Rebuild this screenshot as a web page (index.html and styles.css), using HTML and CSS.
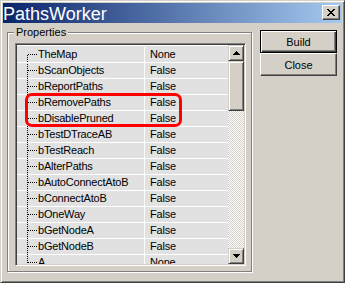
FILE: index.html
```html
<!DOCTYPE html>
<html>
<head>
  <meta name="viewport" content="width=device-width, initial-scale=1.0">
  <link rel="stylesheet" href="styles.css">
</head>
<body>
  <div class="window">
    <!-- Barra de título -->
    <div class="titlebar">
      <span class="title">PathsWorker</span>
      <div class="title-close">
        <svg width="8" height="7" viewBox="0 0 8 7" shape-rendering="crispEdges">
          <path d="M0 0h2v1H0zM6 0h2v1H6zM1 1h2v1H1zM5 1h2v1H5zM2 2h4v1H2zM3 3h2v1H3zM2 4h4v1H2zM1 5h2v1H1zM5 5h2v1H5zM0 6h2v1H0zM6 6h2v1H6z" fill="#000"/>
        </svg>
      </div>
    </div>

    <div class="client">
      <!-- Grupo de propriedades -->
      <div class="group">
        <span class="group-label">Properties</span>
        <div class="listbox">
          <div class="rows">
            <div class="row first"><div class="name">TheMap</div><div class="value">None</div></div>
            <div class="row"><div class="name">bScanObjects</div><div class="value">False</div></div>
            <div class="row"><div class="name">bReportPaths</div><div class="value">False</div></div>
            <div class="row"><div class="name">bRemovePaths</div><div class="value">False</div></div>
            <div class="row"><div class="name">bDisablePruned</div><div class="value">False</div></div>
            <div class="row"><div class="name">bTestDTraceAB</div><div class="value">False</div></div>
            <div class="row"><div class="name">bTestReach</div><div class="value">False</div></div>
            <div class="row"><div class="name">bAlterPaths</div><div class="value">False</div></div>
            <div class="row"><div class="name">bAutoConnectAtoB</div><div class="value">False</div></div>
            <div class="row"><div class="name">bConnectAtoB</div><div class="value">False</div></div>
            <div class="row"><div class="name">bOneWay</div><div class="value">False</div></div>
            <div class="row"><div class="name">bGetNodeA</div><div class="value">False</div></div>
            <div class="row"><div class="name">bGetNodeB</div><div class="value">False</div></div>
            <div class="row"><div class="name">A</div><div class="value">None</div></div>
          </div>
          <div class="scrollbar">
            <div class="sb-btn">
              <svg width="7" height="4" viewBox="0 0 7 4" shape-rendering="crispEdges"><path d="M3 0h1v1h1v1h1v1h1v1H0V3h1V2h1V1h1z" fill="#000"/></svg>
            </div>
            <div class="sb-thumb"></div>
            <div class="sb-track"></div>
            <div class="sb-btn">
              <svg width="7" height="4" viewBox="0 0 7 4" shape-rendering="crispEdges"><path d="M0 0h7v1H6v1H5v1H4v1H3V3H2V2H1V1H0z" fill="#000"/></svg>
            </div>
          </div>
        </div>
      </div>

      <!-- Botões -->
      <div class="side">
        <div class="btn default">Build</div>
        <div class="btn">Close</div>
      </div>
    </div>

    <!-- Destaque vermelho -->
    <div class="highlight"></div>
  </div>
</body>
</html>
```

FILE: styles.css
```css
:root {
  --face: #D4D0C8;
  --shadow: #808080;
  --dark: #404040;
  --row-bg: #E1E1E1;
}

body {
  margin: 0;
  font-family: "Liberation Sans", Arial, sans-serif;
  font-size: 11px;
  color: #000;
}

.window {
  position: relative;
  width: 345px;
  height: 283px;
  box-sizing: border-box;
  border: 1px solid;
  border-color: var(--face) var(--dark) var(--dark) var(--face);
  box-shadow: inset 1px 1px #fff, inset -1px -1px var(--shadow);
  padding: 2px;
  background: var(--face);
  display: flex;
  flex-direction: column;
}

.titlebar {
  height: 20px;
  flex: none;
  display: flex;
  align-items: flex-start;
  background: linear-gradient(to right, #0A246A, #A6CAF0);
}

.title {
  color: #fff;
  font-size: 18px;
  line-height: 20px;
  padding-top: 1px;
}

.title-close {
  margin: 2px 2px 0 auto;
  width: 18px;
  height: 15px;
  box-sizing: border-box;
  background: var(--face);
  border: 1px solid;
  border-color: #fff var(--dark) var(--dark) #fff;
  box-shadow: inset -1px -1px var(--shadow);
  display: flex;
  align-items: center;
  justify-content: center;
}

.client {
  flex: 1;
  display: flex;
  align-items: flex-start;
}

.group {
  margin: 9px 0 0 4px;
  width: 245px;
  height: 240px;
  box-sizing: border-box;
  border: 1px solid var(--shadow);
  box-shadow: inset 1px 1px #fff, 1px 1px #fff;
  display: flex;
  flex-direction: column;
}

.group-label {
  align-self: flex-start;
  margin: -7px 0 0 6px;
  padding: 0 2px;
  line-height: 13px;
  background: var(--face);
}

.listbox {
  margin: 4px 0 0 7px;
  width: 231px;
  height: 223px;
  box-sizing: border-box;
  border: 1px solid;
  border-color: var(--shadow) #fff #fff var(--shadow);
  box-shadow: inset 1px 1px var(--dark), inset -1px -1px var(--face);
  padding: 1px;
  display: flex;
}

.rows {
  flex: 1;
  overflow: hidden;
  background: var(--row-bg);
  padding-top: 1px;
  border-top: 1px solid #fff;
}

.row {
  display: flex;
  height: 16px;
  box-sizing: border-box;
  border-bottom: 1px solid #fff;
  line-height: 15px;
  letter-spacing: -0.2px;
}

.name {
  position: relative;
  width: 128px;
  box-sizing: border-box;
  padding-left: 21px;
  border-right: 1px solid #fff;
  white-space: nowrap;
}

/* linhas pontilhadas da árvore */
.name::before {
  content: "";
  position: absolute;
  left: 11px;
  top: 7px;
  width: 9px;
  height: 1px;
  background: linear-gradient(to right, #000 50%, transparent 50%) 0 0 / 2px 1px;
}

.name::after {
  content: "";
  position: absolute;
  left: 10px;
  top: 0;
  bottom: -1px;
  width: 1px;
  background: linear-gradient(to bottom, #000 50%, transparent 50%) 0 1px / 1px 2px;
}

.first .name::after {
  top: 7px;
}

.value {
  flex: 1;
  padding-left: 5px;
}

.scrollbar {
  width: 16px;
  flex: none;
  display: flex;
  flex-direction: column;
}

.sb-btn,
.sb-thumb {
  height: 16px;
  flex: none;
  box-sizing: border-box;
  background: var(--face);
  border: 1px solid;
  border-color: var(--face) var(--dark) var(--dark) var(--face);
  box-shadow: inset 1px 1px #fff, inset -1px -1px var(--shadow);
  display: flex;
  align-items: center;
  justify-content: center;
}

.sb-thumb {
  height: 50px;
}

.sb-track {
  flex: 1;
  background: repeating-conic-gradient(var(--face) 0 25%, #fff 0 50%) 0 0 / 2px 2px;
}

.side {
  margin: 7px 0 0 8px;
  width: 77px;
  display: flex;
  flex-direction: column;
}

.btn {
  height: 23px;
  box-sizing: border-box;
  background: var(--face);
  border: 1px solid;
  border-color: #fff var(--dark) var(--dark) #fff;
  box-shadow: inset -1px -1px var(--shadow);
  display: flex;
  align-items: center;
  justify-content: center;
}

.btn.default {
  border-color: #000;
  box-shadow: inset 1px 1px #fff, inset -1px -1px var(--dark), inset -2px -2px var(--shadow);
}

.highlight {
  position: absolute;
  left: 24px;
  top: 92px;
  width: 157px;
  height: 34px;
  box-sizing: border-box;
  border: 3px solid #f00;
  border-radius: 7px;
}
```
